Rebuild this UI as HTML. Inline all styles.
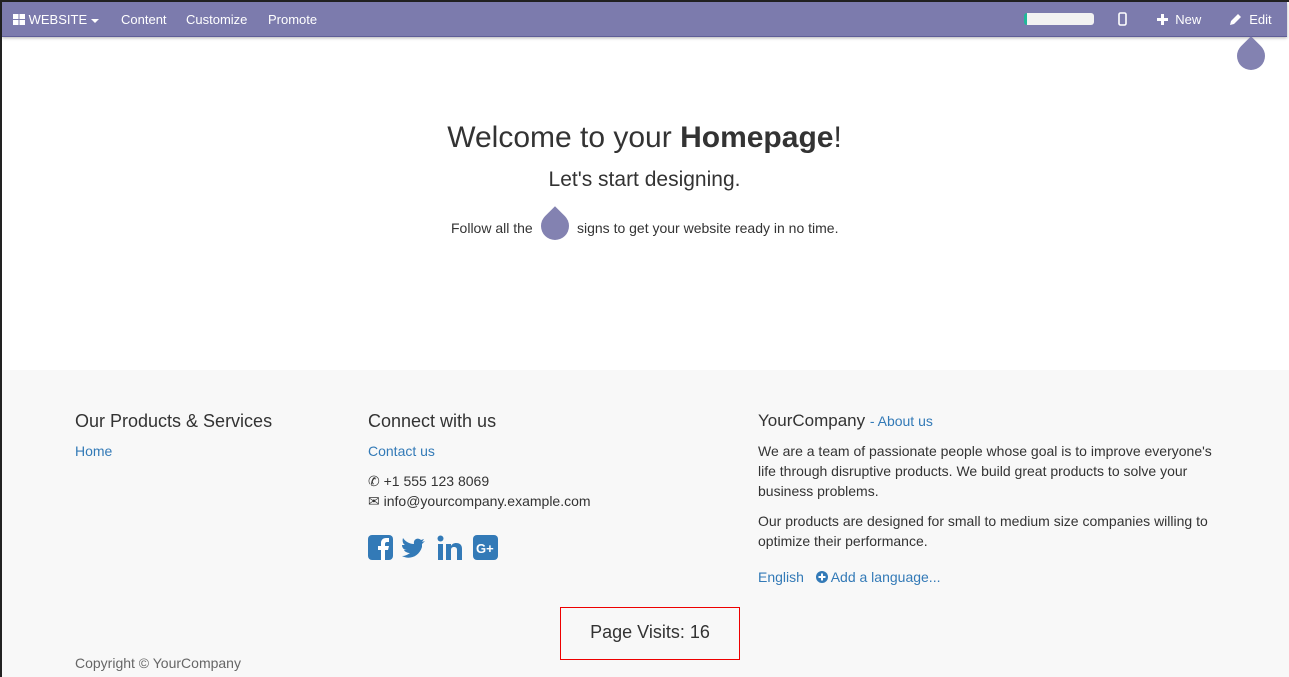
<!DOCTYPE html>
<html><head><meta charset="utf-8"><style>
body{margin:0;width:1289px;height:677px;overflow:hidden;font-family:"Liberation Sans",sans-serif;background:#fff;position:relative;color:#333}
.edge{position:absolute;left:0;top:0;width:2px;height:677px;background:#222}
.top{position:absolute;left:0;top:0;width:1289px;height:2px;background:#222}
.nav{position:absolute;left:2px;top:2px;width:1285px;height:34px;background:#7c7bad;border-bottom:1px solid #5f5e97;box-shadow:0 1px 3px rgba(0,0,0,.3);color:#fff;font-size:13px}
.nav span{position:absolute;top:10px}
.drop{position:absolute;width:28px;height:28px;background:#7c7bad;border-radius:50% 0 50% 50%;transform:rotate(-45deg);opacity:.95}
.foot{position:absolute;left:2px;top:370px;width:1287px;height:307px;background:#f8f8f8}
a{color:#337ab7;text-decoration:none}
.h{position:absolute;font-size:18px;color:#333}
.t{position:absolute;font-size:14px;line-height:20px}
</style></head><body>
<div class="top"></div><div class="edge"></div>
<div class="nav">
<span style="left:11px"><svg width="12" height="11" style="vertical-align:-1px"><rect x="0" y="0" width="5.5" height="5" fill="#fff"/><rect x="6.5" y="0" width="5.5" height="5" fill="#fff"/><rect x="0" y="6" width="5.5" height="5" fill="#fff"/><rect x="6.5" y="6" width="5.5" height="5" fill="#fff"/></svg> WEBSITE <svg width="8" height="5"><path d="M0 0H8L4 4Z" fill="#fff"/></svg></span>
<span style="left:119px">Content</span><span style="left:184px">Customize</span><span style="left:266px">Promote</span>
<div style="position:absolute;left:1022px;top:11px;width:67px;height:12px;background:#f2f2f2;border-radius:3px;border-left:3px solid #21b799"></div>
<svg style="position:absolute;left:1116px;top:10px" width="9" height="14"><rect x="1" y="1" width="7" height="12" rx="1.5" fill="none" stroke="#fff" stroke-width="1.6"/></svg>
<span style="left:1155px"><svg width="11" height="11" style="vertical-align:-1px"><path d="M4 0h3v4h4v3H7v4H4V7H0V4h4z" fill="#fff"/></svg> &nbsp;New</span>
<span style="left:1228px"><svg width="12" height="12" style="vertical-align:-1px"><path d="M0 12l1-4 7-7 3 3-7 7z" fill="#fff"/></svg> &nbsp;Edit</span>
</div>
<div class="drop" style="left:1237px;top:42px"></div>
<div style="position:absolute;top:121px;width:1289px;text-align:center;font-size:30px">Welcome to your <b>Homepage</b>!</div>
<div style="position:absolute;top:168px;width:1289px;text-align:center;font-size:21px">Let's start designing.</div>
<div class="t" style="left:451px;top:218px">Follow all the</div>
<div class="drop" style="left:541px;top:212px"></div>
<div class="t" style="left:577px;top:218px">signs to get your website ready in no time.</div>
<div class="foot"></div>
<div class="h" style="left:75px;top:411px">Our Products &amp; Services</div>
<div class="t" style="left:75px;top:441px"><a>Home</a></div>
<div class="h" style="left:368px;top:411px">Connect with us</div>
<div class="t" style="left:368px;top:441px"><a>Contact us</a></div>
<div class="t" style="left:368px;top:471px">✆ +1 555 123 8069</div>
<div class="t" style="left:368px;top:491px">✉ info@yourcompany.example.com</div>
<svg style="position:absolute;left:368px;top:534px" width="132" height="28">
<rect x="0" y="1" width="25" height="25" rx="4" fill="#337ab7"/><path d="M17 26V16h3l1-4h-4v-2c0-1 .5-2 2-2h2V4h-3c-3 0-5 2-5 5v3h-3v4h3v10z" fill="#fff"/>
<path d="M34 22c7 4 17 1 20-9l0-3 3-3-3 1 2-3-3 1c-3-3-8-1-7 4-5 0-9-3-11-6-1 3 0 6 2 7h-3c0 3 2 5 5 5h-3c1 2 4 3 6 3-3 2-5 3-8 3z" fill="#337ab7"/>
<rect x="70" y="10" width="5" height="16" fill="#337ab7"/><circle cx="72.5" cy="4.5" r="3" fill="#337ab7"/><path d="M78 10h5v2c1-2 3-3 5-3 4 0 6 2 6 6v11h-5V16c0-2-1-3-3-3s-3 1-3 3v10h-5z" fill="#337ab7"/>
<rect x="105" y="1" width="25" height="25" rx="4" fill="#337ab7"/><text x="108" y="19" font-size="13" font-weight="bold" fill="#fff" font-family="Liberation Sans">G+</text>
</svg>
<div class="h" style="left:758px;top:411px;font-size:17px">YourCompany <span style="font-size:14px"><a>- About us</a></span></div>
<div class="t" style="left:758px;top:441px;width:470px">We are a team of passionate people whose goal is to improve everyone's life through disruptive products. We build great products to solve your business problems.</div>
<div class="t" style="left:758px;top:511px;width:470px">Our products are designed for small to medium size companies willing to optimize their performance.</div>
<div class="t" style="left:758px;top:567px"><a>English</a> &nbsp; <a><svg width="12" height="12" style="vertical-align:-1px"><circle cx="6" cy="6" r="6" fill="#337ab7"/><path d="M5 2.5h2v2.5h2.5v2H7v2.5H5V7H2.5V5H5z" fill="#fff"/></svg> Add a language...</a></div>
<div style="position:absolute;left:560px;top:607px;width:178px;height:51px;border:1px solid #e00;font-size:18px;text-align:center;line-height:49px">Page Visits: 16</div>
<div class="t" style="left:75px;top:653px;color:#666">Copyright © YourCompany</div>
</body></html>
